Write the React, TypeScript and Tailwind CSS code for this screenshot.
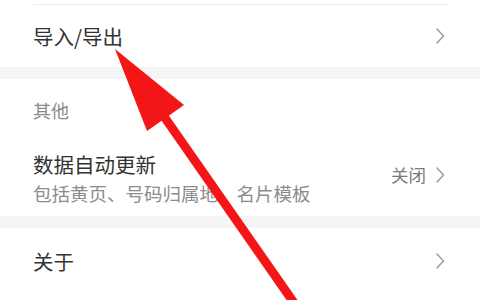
const cjk = { fontFamily: '"Noto Sans CJK SC", "Noto Sans", sans-serif' };

function Chevron() {
  return (
    <svg width="10" height="18" viewBox="0 0 10 18" className="shrink-0">
      <path d="M2 2 L8.5 9 L2 16" fill="none" stroke="#a0a0a0" strokeWidth="1.6" strokeLinecap="round" strokeLinejoin="round" />
    </svg>
  );
}

export default function App() {
  return (
    <div className="relative w-[480px] h-[300px] overflow-hidden bg-white" style={cjk}>
      <div className="pt-[4px]">
        <div className="ml-[33px] mr-[32px] h-px bg-[#ededed]" />
      </div>

      {/* 导入/导出 */}
      <div className="h-[62px] flex items-center justify-between pl-[33px] pr-[35px]">
        <span className="text-[20.5px] leading-[28px] text-[#333]">导入/导出</span>
        <Chevron />
      </div>

      <div className="h-[12px] bg-[#f5f5f5]" />

      {/* 其他 */}
      <div className="h-[62px] flex items-center pl-[33px]">
        <span className="text-[18px] leading-[24px] text-[#8a8a8a]">其他</span>
      </div>

      <div className="h-[75px] flex items-center justify-between pl-[33px] pr-[35px]">
        <div className="flex flex-col">
          <span className="text-[20.5px] leading-[28px] text-[#333]">数据自动更新</span>
          <span className="text-[18.5px] leading-[30px] text-[#8c8c8c]">包括黄页、号码归属地、名片模板</span>
        </div>
        <div className="flex items-center gap-[9px] pb-[7px]">
          <span className="text-[17.5px] leading-[24px] text-[#7a7a7a]">关闭</span>
          <Chevron />
        </div>
      </div>

      <div className="h-[12px] bg-[#f5f5f5]" />

      {/* 关于 */}
      <div className="h-[66px] flex items-center justify-between pl-[33px] pr-[35px]">
        <span className="text-[20.5px] leading-[28px] text-[#333]">关于</span>
        <Chevron />
      </div>

      {/* red annotation arrow */}
      <svg className="absolute left-0 top-0 pointer-events-none" width="480" height="300" viewBox="0 0 480 300">
        <polygon points="115,49 184,105 147,131" fill="#f41616" />
        <line x1="163" y1="115" x2="299" y2="310" stroke="#f41616" strokeWidth="9" />
      </svg>
    </div>
  );
}
